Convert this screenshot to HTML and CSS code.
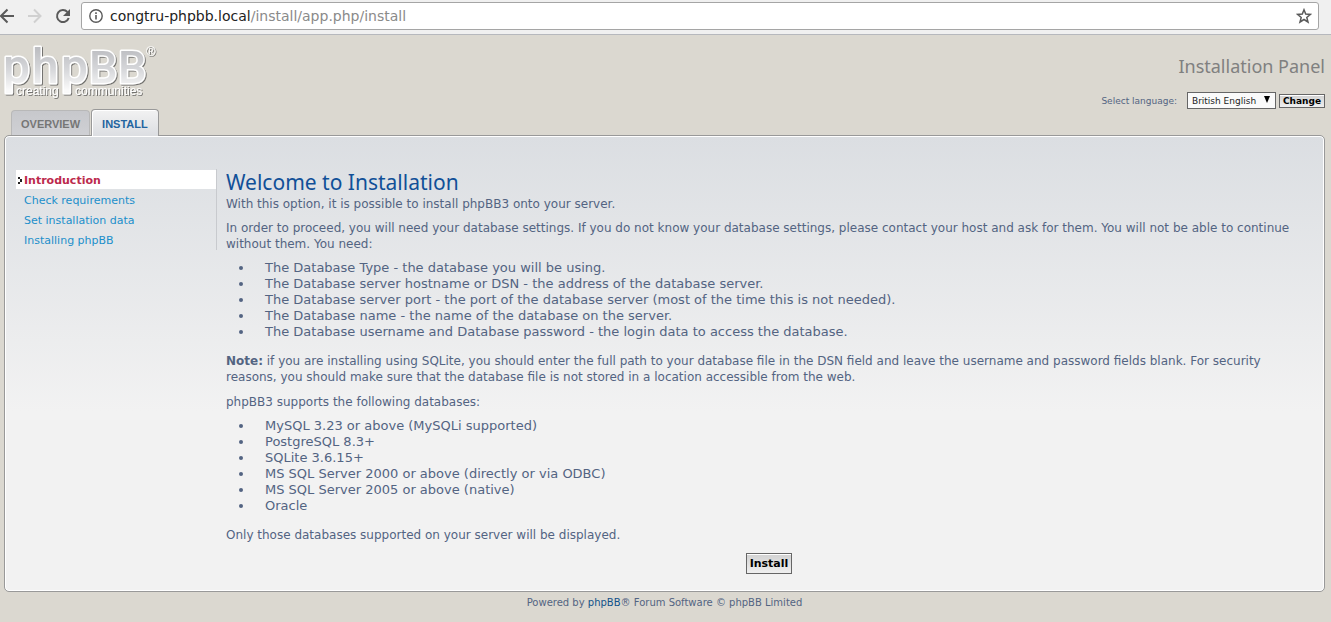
FILE: index.html
```html
<!DOCTYPE html>
<html lang="en">
<head>
<meta charset="utf-8">
<title>Installation Panel</title>
<link rel="stylesheet" href="styles.css">
</head>
<body>
<div class="toolbar">
  <button class="tool back" aria-label="Back"><svg width="16" height="16" viewBox="0 0 16 16"><path d="M14 8H1M7.500 1.500L1 8l6.500 6.500" fill="none" stroke="#5a5a5a" stroke-width="2"/></svg></button>
  <button class="tool forward" aria-label="Forward"><svg width="16" height="16" viewBox="0 0 16 16"><path d="M1 8h12.500M7 1.500L13.500 8 7 14.500" fill="none" stroke="#d0d0d0" stroke-width="2"/></svg></button>
  <button class="tool reload" aria-label="Reload"><svg width="16" height="16" viewBox="0 0 16 16"><path d="M12.4 4A6 6 0 1 0 13.7 10" fill="none" stroke="#5a5a5a" stroke-width="2"/><path d="M15 1v7H8z" fill="#5a5a5a"/></svg></button>
  <div class="address">
    <svg width="14" height="14" viewBox="0 0 14 14"><circle cx="7" cy="7" r="6.2" fill="none" stroke="#5a5a5a" stroke-width="1.4"/><path d="M6.2 6h1.6v4.6H6.2zM6.2 3.3h1.6v1.6H6.2z" fill="#5a5a5a"/></svg>
    <span class="url"><span class="host">congtru-phpbb.local</span>/install/app.php/install</span>
    <button class="tool star" aria-label="Bookmark"><svg width="16" height="16" viewBox="0 0 16 16"><path d="M8 1.8l1.7 4.3 4.7.3-3.6 3 1.2 4.6L8 11.5 4 14l1.200-4.600-3.600-3 4.700-.3z" fill="none" stroke="#5a5a5a" stroke-width="1.5"/></svg></button>
  </div>
</div>
<div class="page">
  <header class="header">
    <a class="logo" href="#" aria-label="phpBB home">
      <svg width="156" height="58" viewBox="0 0 156 58">
        <defs>
          <linearGradient id="metal" gradientUnits="userSpaceOnUse" x1="0" y1="5" x2="0" y2="46"><stop offset="0" stop-color="#bdbec2"/><stop offset="0.500" stop-color="#d6d7da"/><stop offset="1" stop-color="#fafafa"/></linearGradient>
          <filter id="shade" x="-5%" y="-10%" width="112%" height="125%"><feDropShadow dx="1" dy="1" stdDeviation="0.600" flood-color="#444" flood-opacity="0.700"/></filter>
        </defs>
        <g class="wordmark" filter="url(#shade)">
          <text x="-1" y="39" font-size="48">p</text>
          <text x="28" y="39" font-size="48">h</text>
          <text x="57" y="39" font-size="48">p</text>
          <text x="85" y="39" font-size="45">B</text>
          <text x="114" y="39" font-size="45">B</text>
        </g>
        <g class="tagline" filter="url(#shade)">
          <text x="12" y="51" font-size="12">creating</text>
          <text x="71" y="51" font-size="12">communities</text>
          <text x="142" y="12" font-size="13">®</text>
        </g>
      </svg>
    </a>
    <div class="heading">
      <h1>Installation Panel</h1>
      <form class="language">
        <label for="language">Select language:</label>
        <span class="picker"><select id="language"><option>British English</option></select><svg width="6" height="7" viewBox="0 0 6 7"><path d="M0 0h6L3 7z"/></svg></span>
        <button type="button" class="change">Change</button>
      </form>
    </div>
  </header>
  <nav class="tabs">
    <a class="tab" href="#">OVERVIEW</a>
    <a class="tab active" href="#">INSTALL</a>
  </nav>
  <div class="panel">
    <nav class="menu">
      <a class="current" href="#"><svg width="6" height="7" viewBox="0 0 6 7"><path d="M1 0h2v2H1zM3 2h2v3H3zM1 5h2v2H1z" fill="#222"/></svg>Introduction</a>
      <a href="#">Check requirements</a>
      <a href="#">Set installation data</a>
      <a href="#">Installing phpBB</a>
    </nav>
    <main class="main">
      <h2>Welcome to Installation</h2>
      <p>With this option, it is possible to install phpBB3 onto your server.</p>
      <p>In order to proceed, you will need your database settings. If you do not know your database settings, please contact your host and ask for them. You will not be able to continue without them. You need:</p>
      <ul>
        <li>The Database Type - the database you will be using.</li>
        <li>The Database server hostname or DSN - the address of the database server.</li>
        <li>The Database server port - the port of the database server (most of the time this is not needed).</li>
        <li>The Database name - the name of the database on the server.</li>
        <li>The Database username and Database password - the login data to access the database.</li>
      </ul>
      <p class="note"><strong>Note:</strong> if you are installing using SQLite, you should enter the full path to your database file in the DSN field and leave the username and password fields blank. For security reasons, you should make sure that the database file is not stored in a location accessible from the web.</p>
      <p>phpBB3 supports the following databases:</p>
      <ul>
        <li>MySQL 3.23 or above (MySQLi supported)</li>
        <li>PostgreSQL 8.3+</li>
        <li>SQLite 3.6.15+</li>
        <li>MS SQL Server 2000 or above (directly or via ODBC)</li>
        <li>MS SQL Server 2005 or above (native)</li>
        <li>Oracle</li>
      </ul>
      <p>Only those databases supported on your server will be displayed.</p>
      <form class="submit"><button type="button" class="install">Install</button></form>
    </main>
  </div>
  <footer class="footer">Powered by <a href="#">phpBB</a>® Forum Software © phpBB Limited</footer>
</div>
</body>
</html>
```
FILE: styles.css
```css
* { box-sizing: border-box; }
body {
  margin: 0;
  background: #dbd8d0;
  color: #536482;
  font-family: "DejaVu Sans", Verdana, sans-serif;
  font-size: 12px;
  line-height: 16px;
}
a { text-decoration: none; }
h1, h2, p, ul { margin: 0; font-weight: normal; }

.toolbar {
  display: flex;
  align-items: center;
  height: 35px;
  padding: 0 12px 3px 0;
  background: #f0f0f0;
  border-bottom: 1px solid #b6b8bd;
}
.tool {
  display: flex;
  padding: 0;
  border: 0;
  background: none;
}
.forward { margin-left: 11px; }
.reload { margin: 0 10px 0 12px; }
.address {
  flex: 1;
  display: flex;
  align-items: center;
  height: 28px;
  margin-top: 1px;
  padding: 0 6px 0 7px;
  background: #fff;
  border: 1px solid #a5a5a5;
  border-radius: 3px;
}
.url {
  flex: 1;
  margin-left: 7px;
  color: #8a8a8a;
  font-size: 14px;
}
.host { color: #222; }

.page { padding: 9px 6px 0 4px; }
.header {
  display: flex;
  justify-content: space-between;
  height: 65px;
}
.logo svg { display: block; overflow: visible; }
.wordmark {
  font-family: Roboto, sans-serif;
  font-weight: 500;
  fill: url(#metal);
  stroke: #fff;
  stroke-width: 3px;
  stroke-linejoin: round;
  paint-order: stroke;
}
.tagline {
  font-family: "Liberation Sans", Arial, sans-serif;
  fill: #fff;
}
.heading h1 {
  margin-top: 10px;
  color: #808080;
  font-family: "Trebuchet MS", "Noto Sans", sans-serif;
  font-size: 18px;
  line-height: 24px;
  text-align: right;
}
.language {
  display: flex;
  align-items: center;
  justify-content: flex-end;
  margin-top: 14px;
  font-size: 9px;
  line-height: 12px;
}
.picker {
  position: relative;
  margin: 0 3px 0 10px;
}
.picker select {
  display: block;
  appearance: none;
  width: 89px;
  height: 17px;
  padding: 1px 4px 0;
  border: 1px solid #666;
  border-radius: 0;
  background: #fafafa;
  color: #222;
  font: 9px/15px "DejaVu Sans", sans-serif;
}
.picker svg {
  position: absolute;
  top: 4px;
  right: 6px;
  pointer-events: none;
}
.change, .install {
  border: 1px solid #666;
  background: linear-gradient(#d2d2d2, #efefef);
  box-shadow: inset 0 1px #fff;
  color: #000;
  font-family: "DejaVu Sans", sans-serif;
  font-weight: bold;
}
.change {
  height: 14px;
  padding: 0 3px;
  font-size: 9px;
  line-height: 12px;
}

.tabs {
  display: flex;
  align-items: flex-end;
  position: relative;
  height: 27px;
  margin-bottom: -1px;
  padding-left: 7px;
}
.tab {
  height: 25px;
  margin-bottom: 1px;
  padding: 0 9px;
  border: 1px solid #b8b8b8;
  border-bottom: 0;
  border-radius: 4px 4px 0 0;
  background: linear-gradient(#c7c8cc, #cfd0d4);
  color: #767676;
  font: bold 11px/27px "Liberation Sans", Arial, sans-serif;
}
.tab.active {
  height: 27px;
  margin: 0 0 0 1px;
  padding: 0 10px;
  border-color: #999;
  background: linear-gradient(#f2f2f2, #dcdee2);
  box-shadow: inset 1px 1px #fff;
  color: #23649f;
  line-height: 29px;
}

.panel {
  display: flex;
  padding: 33px 12px 17px 11px;
  border: 1px solid #999;
  border-radius: 5px;
  background: linear-gradient(#dbdee2, #f2f2f2 275px);
  box-shadow: inset 0 0 0 1px #fff;
}
.menu {
  flex: none;
  align-self: flex-start;
  width: 201px;
  border-right: 1px solid #c8cace;
  font-size: 11px;
}
.menu a {
  display: block;
  height: 19px;
  margin: 1px 0;
  padding-left: 8px;
  color: #1c8fcb;
  line-height: 21px;
}
.menu .current {
  background: #fff;
  color: #bc2a4d;
  font-weight: bold;
}
.menu .current svg { margin-left: -7px; margin-right: 1px; }

.main { flex: 1; padding-left: 9px; }
.main h2 {
  margin-bottom: 1px;
  color: #115098;
  font-family: "Trebuchet MS", "Noto Sans", sans-serif;
  font-size: 21px;
  line-height: 26px;
}
.main p { margin-bottom: 8px; }
.main .note { margin-bottom: 9px; }
.main ul {
  margin-bottom: 13px;
  padding-left: 28px;
  font-size: 13px;
}
.main li { padding-left: 11px; }
.submit {
  display: flex;
  justify-content: center;
  padding-top: 2px;
}
.install {
  height: 21px;
  padding: 1px 3px 0;
  font-size: 11px;
  line-height: 18px;
}
.footer {
  padding: 3px 0 12px;
  font-size: 10px;
  text-align: center;
}
.footer a { color: #105289; }
```
